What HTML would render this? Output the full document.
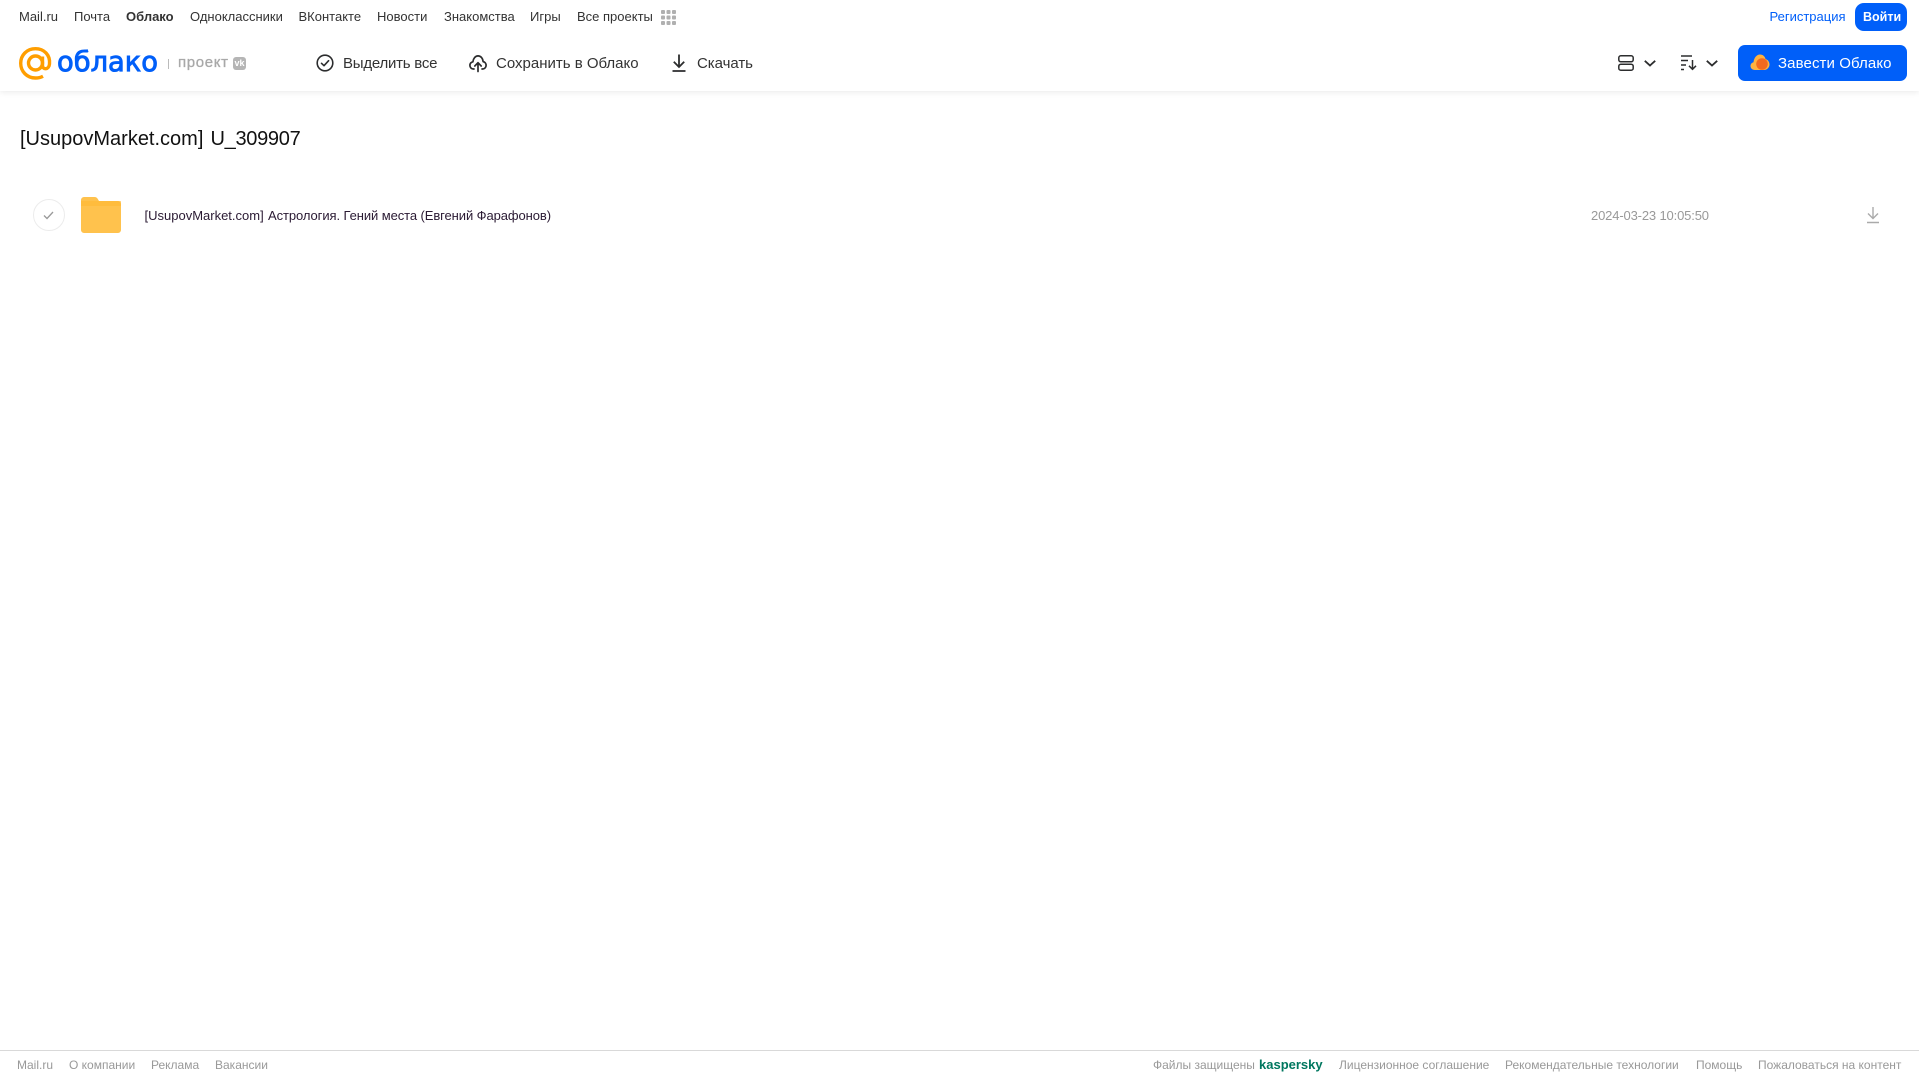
<!DOCTYPE html>
<html lang="ru"><head><meta charset="utf-8"><title>Облако</title>
<style>
html,body{margin:0;padding:0;background:#fff}
body{width:1919px;height:1079px;position:relative;overflow:hidden;font-family:"Liberation Sans",Arial,sans-serif}
.t{position:absolute;white-space:nowrap;line-height:16px}
.n{top:9px;font-size:13px;color:#333}
.h{top:54.500px;font-size:15px;color:#333;line-height:18px}
.f{top:1057px;font-size:12px;color:#999}
svg{position:absolute;overflow:visible}
#hdr{position:absolute;left:0;top:0;width:1919px;height:91px;background:#fff;box-shadow:0 1px 6px rgba(0,0,0,.09)}
</style></head><body>
<div id="hdr"></div>
<span class="t n" style="left:19px">Mail.ru</span>
<span class="t n" style="left:74px">Почта</span>
<span class="t n" style="left:126px;font-weight:700">Облако</span>
<span class="t n" style="left:190px">Одноклассники</span>
<span class="t n" style="left:298.500px">ВКонтакте</span>
<span class="t n" style="left:377px">Новости</span>
<span class="t n" style="left:444px">Знакомства</span>
<span class="t n" style="left:530px">Игры</span>
<span class="t n" style="left:577px">Все проекты</span>
<svg style="left:661px;top:10px" width="15" height="15" fill="#b0b0b0"><rect x="0" y="0" width="4" height="4" rx="1"/><rect x="5.500" y="0" width="4" height="4" rx="1"/><rect x="11" y="0" width="4" height="4" rx="1"/><rect x="0" y="5.500" width="4" height="4" rx="1"/><rect x="5.500" y="5.500" width="4" height="4" rx="1"/><rect x="11" y="5.500" width="4" height="4" rx="1"/><rect x="0" y="11" width="4" height="4" rx="1"/><rect x="5.500" y="11" width="4" height="4" rx="1"/><rect x="11" y="11" width="4" height="4" rx="1"/></svg>
<span class="t n" style="left:1769.500px;color:#005ff9">Регистрация</span>
<div style="position:absolute;left:1855px;top:3px;width:52px;height:28px;border-radius:9px;background:#005ff9"></div>
<span class="t n" style="left:1863px;color:#fff;font-weight:700;font-size:12.500px">Войти</span>

<svg style="left:19px;top:47px" width="33" height="33" viewBox="0 0 33 33" fill="none" stroke="#ff9e00" stroke-width="3.400"><circle cx="16.500" cy="16" r="7"/><path d="M23.500 9.500v9c0 4.500 6.500 4.500 7-1.500.9-9-5.500-15.300-14-15.300C8 1.700 1.700 8 1.700 16.300S8 31 16.500 31c3 0 5.200-.6 7.500-1.800"/></svg>
<svg style="left:0;top:40px" width="170" height="50"><text x="57" y="31" font-family="'DejaVu Sans',sans-serif" font-size="28" fill="#005ff9" stroke="#005ff9" stroke-width=".9" textLength="101" lengthAdjust="spacingAndGlyphs">облако</text></svg>
<div style="position:absolute;left:168px;top:59px;width:1px;height:10px;background:#bbb"></div>
<span class="t" style="left:178px;top:55px;font-size:15px;color:#a8a8a8;letter-spacing:.65px;-webkit-text-stroke:.3px #a8a8a8">проект</span>
<div style="position:absolute;left:233px;top:56.500px;width:13px;height:13px;border-radius:3px;background:#b5b5b5;color:#fff;font-size:9px;font-weight:700;line-height:13px;text-align:center">vk</div>

<svg style="left:316px;top:54px" width="18" height="18" fill="none" stroke="#2c2d2e" stroke-width="1.600"><circle cx="9" cy="9" r="7.800"/><path d="M5.500 9.300l2.500 2.400 4.600-5" stroke-linecap="round" stroke-linejoin="round"/></svg>
<span class="t h" style="left:343px;letter-spacing:-.23px">Выделить все</span>
<svg style="left:469px;top:54px" width="18" height="18" fill="none" stroke="#2c2d2e" stroke-width="1.700" stroke-linecap="round" stroke-linejoin="round"><path d="M5 15H4.500C2.300 15 .9 13.300.9 11.400c0-1.800 1.200-3.200 3-3.600C4.300 4.300 6.400 1.900 9 1.900c2.700 0 4.800 2.200 5.100 5.700 1.800.3 3 1.900 3 3.800 0 1.900-1.500 3.600-3.600 3.600H13"/><path d="M9 17.500V9M5.800 12L9 8.700l3.200 3.300"/></svg>
<span class="t h" style="left:496px">Сохранить в Облако</span>
<svg style="left:671px;top:54px" width="16" height="18" fill="none" stroke="#2c2d2e" stroke-width="1.800"><path d="M8 .5v12M2.800 7.800L8 13l5.200-5.200M1.500 17h13"/></svg>
<span class="t h" style="left:697px;letter-spacing:-.05px">Скачать</span>

<svg style="left:1618px;top:55px" width="16" height="16" fill="none" stroke="#2c2d2e" stroke-width="1.500"><rect x=".8" y=".8" width="14.400" height="6" rx="2"/><rect x=".8" y="9.200" width="14.400" height="6" rx="2"/></svg>
<svg style="left:1644px;top:60px" width="12" height="7" fill="none" stroke="#2c2d2e" stroke-width="1.800"><path d="M.8.800L6 5.500 11.200.800"/></svg>
<svg style="left:1681px;top:55px" width="16" height="16" fill="none" stroke="#2c2d2e" stroke-width="1.500"><path d="M0 1h11M0 5.500h7M0 10h5M0 14.500h3M11.500 5v9M8 10.800l3.500 3.500 3.500-3.500"/></svg>
<svg style="left:1706px;top:60px" width="12" height="7" fill="none" stroke="#2c2d2e" stroke-width="1.800"><path d="M.8.800L6 5.500 11.200.800"/></svg>

<div style="position:absolute;left:1738px;top:45px;width:169px;height:36px;border-radius:7px;background:#005ff9"></div>
<svg style="left:1750px;top:54px" width="20" height="17"><path d="M5 16C2 16 .5 14 .5 12c0-2 1.300-3.400 3-3.800C4 4 6.500.5 10 .5c3 0 5 2 5.500 4.500C18 5.800 19.500 8 19.500 10.500c0 3-2.500 5.500-5.500 5.500z" fill="#ffb23f"/><circle cx="12" cy="10" r="5.800" fill="#f26a1f"/></svg>
<span class="t h" style="left:1778px;color:#fff;letter-spacing:.1px">Завести Облако</span>

<span class="t" style="left:20px;top:126.500px;font-size:20px;line-height:24px;color:#111">[UsupovMarket.com]</span>
<span class="t" style="left:210.500px;top:126.500px;font-size:20px;line-height:24px;color:#111;letter-spacing:-.3px">U_309907</span>

<div style="position:absolute;left:33px;top:199px;width:30px;height:30px;border:1px solid #ececec;border-radius:50%;box-sizing:content-box"></div>
<svg style="left:43px;top:211px" width="11" height="9" fill="none" stroke="#9a9a9a" stroke-width="1.300"><path d="M1 4.500l3 3L10 1"/></svg>
<svg style="left:81px;top:197px" width="40" height="36"><path d="M0 3a3 3 0 0 1 3-3h10.500c1.600 0 2.500.7 3.300 2l1.200 2H37a3 3 0 0 1 3 3v26a3 3 0 0 1-3 3H3a3 3 0 0 1-3-3z" fill="#ffc24d"/><rect x="0" y="4" width="40" height="5" fill="#ffb733" opacity=".6"/></svg>
<span class="t" style="left:144.500px;top:207.500px;font-size:13px;color:#2a1a33">[UsupovMarket.com]</span>
<span class="t" style="left:268px;top:207.500px;font-size:13px;color:#2a1a33;letter-spacing:-.085px">Астрология. Гений места (Евгений Фарафонов)</span>

<span class="t" style="left:1591px;top:207.500px;font-size:13px;color:#999;letter-spacing:-.15px">2024-03-23 10:05:50</span>
<svg style="left:1866px;top:206px" width="14" height="18" fill="none" stroke="#aaa" stroke-width="1.400"><path d="M7 1v11M2 7.500L7 12.500l5-5M1 16.500h12"/></svg>

<div style="position:absolute;left:0;top:1050px;width:1919px;height:1px;background:#d9d9d9"></div>
<span class="t f" style="left:17px">Mail.ru</span>
<span class="t f" style="left:69px">О компании</span>
<span class="t f" style="left:151px">Реклама</span>
<span class="t f" style="left:215px">Вакансии</span>
<span class="t f" style="left:1153px">Файлы защищены</span>
<span class="t f" style="left:1259px;color:#00775f;font-weight:700;font-size:13px">kaspersky</span>
<span class="t f" style="left:1339px">Лицензионное соглашение</span>
<span class="t f" style="left:1505px">Рекомендательные технологии</span>
<span class="t f" style="left:1696px">Помощь</span>
<span class="t f" style="left:1758px">Пожаловаться на контент</span>
</body></html>
